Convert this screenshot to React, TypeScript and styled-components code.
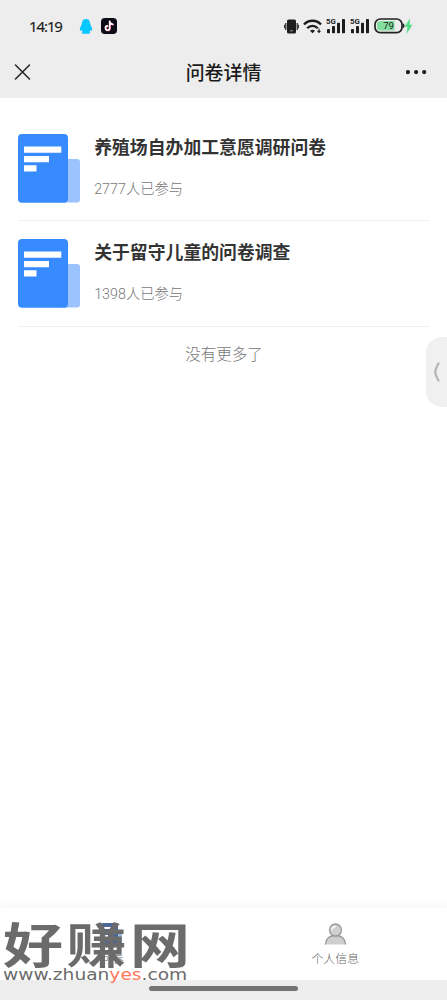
import React from 'react';
import styled, { createGlobalStyle } from 'styled-components';

const Global = createGlobalStyle`
  * { box-sizing: border-box; }
  body { margin: 0; background: #fff; }
  svg { display: block; flex: none; }
`;

const Screen = styled.div`
  position: relative;
  width: 447px;
  height: 1000px;
  display: flex;
  flex-direction: column;
  overflow: hidden;
  background: #fff;
  font-family: Roboto, 'Noto Sans CJK SC', sans-serif;
`;

const Top = styled.header`
  height: 98px;
  background: #ededed;
`;

const StatusBar = styled.div`
  height: 46px;
  padding: 6px 34px 0 29px;
  display: flex;
  align-items: center;
  justify-content: space-between;
`;

const Cluster = styled.div<{ $gap: number }>`
  display: flex;
  align-items: center;
  gap: ${(p) => p.$gap}px;
`;

const Clock = styled.span`
  width: 42px;
  font: 400 15px/20px 'Noto Sans', sans-serif;
  letter-spacing: -1.1px;
  white-space: nowrap;
  color: #1c1c1c;
  -webkit-text-stroke: 0.15px #1c1c1c;
`;

const TitleBar = styled.div`
  height: 52px;
  padding: 0 20px 0 14px;
  display: grid;
  grid-template-columns: 60px 1fr 54px;
  align-items: center;
  justify-items: center;
`;

const Title = styled.h1`
  margin: 0;
  padding-top: 3px;
  font-size: 18.9px;
  line-height: 28px;
  font-weight: 500;
  color: #1b1b1b;
`;

const Start = styled.div`
  justify-self: start;
`;

const End = styled.div`
  justify-self: end;
`;

const List = styled.main`
  flex: 1;
  padding: 18px 17px 0 18px;
`;

const Item = styled.article`
  height: 105.4px;
  padding-top: 17.7px;
  display: flex;
  gap: 14.2px;
  border-bottom: 1.5px solid #f0f0f0;
`;

const ItemText = styled.div`
  display: flex;
  flex-direction: column;
`;

const ItemTitle = styled.h2`
  margin: 1px 0 0;
  font-size: 17.85px;
  line-height: 26px;
  font-weight: 700;
  color: #333;
`;

const ItemCount = styled.p`
  margin: 18.2px 0 0;
  font-size: 14.3px;
  line-height: 20px;
  font-weight: 300;
  color: #777;
`;

const NoMore = styled.p`
  margin: 16px 0 0;
  text-align: center;
  font-size: 15.5px;
  line-height: 24px;
  font-weight: 300;
  color: #777;
`;

const TabBar = styled.nav`
  height: 72px;
  display: grid;
  grid-template-columns: 1fr 1fr;
  background: #fff;
  box-shadow: 0 -2px 9px rgba(0, 0, 0, 0.045);
`;

const Tab = styled.div`
  display: flex;
  flex-direction: column;
  align-items: center;
  padding-top: 14.5px;
  gap: 4.5px;
  font-size: 11.9px;
  line-height: 18px;
  font-weight: 300;
  color: #666;
`;

const HomeArea = styled.footer`
  height: 20px;
  padding-top: 6px;
  display: flex;
  justify-content: center;
  background: #ededed;
`;

const HomeBar = styled.div`
  width: 149px;
  height: 5px;
  border-radius: 3px;
  background: #747474;
`;

const SideHandle = styled.div`
  position: absolute;
  right: 0;
  top: 337px;
  width: 21px;
  height: 70px;
  border-radius: 16px 0 0 16px;
  background: #f0f0f0;
  display: flex;
  align-items: center;
  justify-content: center;
`;

const Watermark = styled.div`
  position: absolute;
  left: 3px;
  top: 914px;
  width: 190px;
  color: #6b6b6b;
`;

const Brand = styled.div`
  height: 53px;
  font: 700 60px/57px 'Noto Sans CJK SC', sans-serif;
  letter-spacing: 3.5px;
  white-space: nowrap;
  transform: scaleY(0.8);
`;

const Site = styled.div`
  width: max-content;
  font: 400 15px/16px 'DejaVu Sans', sans-serif;
  white-space: nowrap;
  transform: scaleX(1.24);
  transform-origin: left;
  b { font-weight: 400; color: #ff795c; }
`;

const Signal = () => (
  <svg width="20" height="16" viewBox="0 0 20 16" fill="#1c1c1c">
    <text x="0" y="6.200" fontFamily="Roboto" fontWeight="700" fontSize="7.800">5G</text>
    <rect x="1" y="11" width="3" height="4.300" rx=".8" />
    <rect x="6" y="8" width="3" height="7.300" rx=".8" />
    <rect x="11" y="4.800" width="3" height="10.500" rx=".8" />
    <rect x="16" y="1" width="3" height="14.300" rx=".8" />
  </svg>
);

const Doc = () => (
  <svg width="62" height="69" viewBox="0 0 62 69">
    <rect x="40" y="25" width="22" height="43.500" rx="3" fill="#9bc4ff" />
    <rect width="50" height="68.700" rx="4" fill="#388bff" />
    <path d="M6 12.600h37.300v6.200H6zM6 22h25v6.200H6zM6 31.200h12.500v6.200H6z" fill="#fff" />
  </svg>
);

const surveys = [
  { title: '养殖场自办加工意愿调研问卷', count: '2777人已参与' },
  { title: '关于留守儿童的问卷调查', count: '1398人已参与' },
];

export default function App() {
  return (
    <Screen>
      <Global />
      <Top>
        <StatusBar>
          <Cluster $gap={8}>
            <Clock>14:19</Clock>
            <svg width="14" height="15" viewBox="0 0 13 15" fill="#08c6ff">
              <path d="M6.500 0C3.900 0 2.300 1.900 2.400 4.500 2.400 6.200.3 7.800.3 10.600c0 1.400.8 1.500 1.600.5.300.8.700 1.300 1.200 1.800-1.400.5-1 1.800.7 1.800h5.400c1.700 0 2.100-1.300.7-1.800.5-.5.900-1 1.200-1.800.8 1 1.600.9 1.600-.5 0-2.800-2.100-4.400-2.100-6.100C10.700 1.900 9.100 0 6.500 0Z" />
            </svg>
            <svg width="16" height="16" viewBox="0 0 16 16" fill="none" strokeLinecap="round">
              <rect width="16" height="16" rx="3.800" fill="#0c0b18" />
              <path d="M8.600 3.200v6.900a2.100 2.100 0 1 1-2.200-2.200M8.600 3.400c.2 1.900 1.400 2.800 3.100 2.900" stroke="#f04c75" strokeWidth="1.700" transform="translate(.5 .4)" />
              <path d="M8.600 3.200v6.900a2.100 2.100 0 1 1-2.200-2.200M8.600 3.400c.2 1.900 1.400 2.800 3.100 2.900" stroke="#fff" strokeWidth="1.600" />
            </svg>
          </Cluster>
          <Cluster $gap={4}>
            <svg width="15" height="15" viewBox="0 0 15 15" fill="#1c1c1c">
              <rect x="3" y=".5" width="9" height="14" rx="1.500" />
              <path d="M1.200 4h1.200v7H1.200zM0 5.800h.9v3.400H0zM12.600 4h1.200v7h-1.200zM14.100 5.800h.9v3.400h-.9z" />
              <path d="M6.200 11.300h2.600v1H6.200z" fill="#aaa" />
            </svg>
            <svg width="19" height="15" viewBox="0 0 19 15" fill="none" stroke="#1c1c1c" strokeWidth="2.300">
              <path d="M1 5.500c4.500-5 12.500-5 17 0M4.200 9.200c3-3 7.600-3 10.600 0" />
              <path d="m9.500 14.300-2.500-2.600q2.500-1.900 5 0z" fill="#1c1c1c" stroke="none" />
              <path d="M16 9.500v3M14.700 12l1.300 1.700 1.300-1.700z" strokeWidth="1" fill="#1c1c1c" />
            </svg>
            <Signal />
            <Signal />
            <svg width="39" height="16" viewBox="0 0 39 16">
              <rect x="1" y="1" width="27" height="13.600" rx="5.300" fill="#ededed" stroke="#222" strokeWidth="1.700" />
              <path d="M6 3h14.500v9.600H6a3 3 0 0 1-3-3V6a3 3 0 0 1 3-3Z" fill="#82dfa0" />
              <path d="M28.800 5q1.800 1.300 1.800 2.800t-1.800 2.800z" fill="#222" />
              <text x="14.500" y="11.200" textAnchor="middle" fontFamily="Roboto" fontSize="9.500" fill="#222">79</text>
              <path d="m35.700 1.300-4.600 7.200h2.700l-.8 6.200 5-7.700h-2.800z" fill="#4ddc82" stroke="#4ddc82" strokeWidth=".6" />
            </svg>
          </Cluster>
        </StatusBar>
        <TitleBar>
          <Start>
            <svg width="17" height="17" viewBox="0 0 17 17" stroke="#2b2b2b" strokeWidth="1.600" strokeLinecap="round">
              <path d="m1.500 1 14 14m0-14-14 14" />
            </svg>
          </Start>
          <Title>问卷详情</Title>
          <End>
            <svg width="21" height="5" viewBox="0 0 21 5" fill="#1b1b1b">
              <circle cx="2" cy="2.100" r="2.100" />
              <circle cx="10.100" cy="2.100" r="2.100" />
              <circle cx="18.200" cy="2.100" r="2.100" />
            </svg>
          </End>
        </TitleBar>
      </Top>
      <List>
        {surveys.map((s) => (
          <Item key={s.title}>
            <Doc />
            <ItemText>
              <ItemTitle>{s.title}</ItemTitle>
              <ItemCount>{s.count}</ItemCount>
            </ItemText>
          </Item>
        ))}
        <NoMore>没有更多了</NoMore>
      </List>
      <TabBar>
        <Tab>
          <svg width="23" height="23" viewBox="0 0 23 23">
            <rect x="14" y="8" width="8" height="14" rx="1" fill="#9bb5dd" />
            <rect x="1" width="17" height="22" rx="1.500" fill="#4d6798" />
            <path d="M4 4h11v2H4zM4 8h7v2H4zM4 12h4v2H4z" fill="#fff" />
          </svg>
          问卷
        </Tab>
        <Tab>
          <svg width="23" height="23" viewBox="0 0 23 23" fill="#cfcfcf" stroke="#999" strokeWidth="1.300">
            <path d="M1.300 21.500C2 15.500 6 12.500 11.500 12.500S21 15.500 21.700 21.500" />
            <circle cx="11.500" cy="7" r="6" />
            <path d="M7.800 7a3.700 3.700 0 0 1 4-3.500" stroke="#fff" fill="none" />
          </svg>
          个人信息
        </Tab>
      </TabBar>
      <HomeArea>
        <HomeBar />
      </HomeArea>
      <SideHandle>
        <svg width="7" height="20" viewBox="0 0 7 20" fill="none" stroke="#b5b5b5" strokeWidth="2.200" strokeLinecap="round">
          <path d="M5.500 1.500 3 6.500Q1.500 10 3 13.500L5.500 18.500" />
        </svg>
      </SideHandle>
      <Watermark>
        <Brand>好赚网</Brand>
        <Site>www.zhuan<b>yes</b>.com</Site>
      </Watermark>
    </Screen>
  );
}
